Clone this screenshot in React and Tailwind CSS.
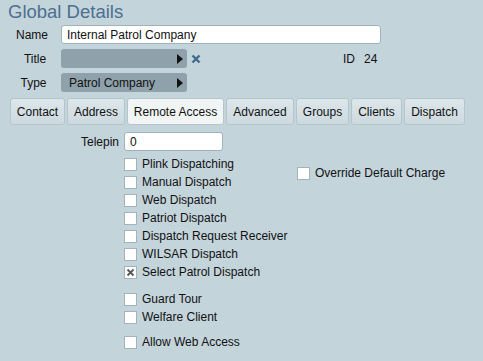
import React from "react";

const font = { fontFamily: '"Liberation Sans", Arial, sans-serif' };

const Check = ({ label, checked }) => (
    <div className="flex items-center h-[18px] whitespace-nowrap">
        <span className="w-[13px] h-[13px] bg-white border border-[#a3b3bb] flex items-center justify-center shrink-0">
            {checked && (
                <svg width="9" height="9" viewBox="0 0 9 9">
                    <path d="M1.5 1.5 L7.5 7.5 M7.5 1.5 L1.5 7.5" stroke="#555" strokeWidth="1.8" />
                </svg>
            )}
        </span>
        <span className="ml-[5px]">{label}</span>
    </div>
);

const Picker = ({ text }) => (
    <div className="w-[126px] h-[19px] bg-[#8fa1ab] rounded-[3px] flex items-center justify-between pl-[8px] pr-[4px]">
        <span>{text}</span>
        <svg width="6" height="10" viewBox="0 0 6 10"><path d="M0 0 L6 5 L0 10 Z" fill="#111" /></svg>
    </div>
);

const tabs = [
    { name: "Contact", w: "w-[55px]" },
    { name: "Address", w: "w-[58px]" },
    { name: "Remote Access", w: "w-[97px]" },
    { name: "Advanced", w: "w-[68px]" },
    { name: "Groups", w: "w-[53px]" },
    { name: "Clients", w: "w-[51px]" },
    { name: "Dispatch", w: "w-[61px]" },
];

const App = () => {
    return (
        <div style={font} className="w-[483px] h-[361px] bg-[#c4d4db] text-[12px] text-[#111] overflow-hidden">
            <div className="pl-[8px] pt-[1px] text-[18.5px] leading-[22px] text-[#4b7090]">Global Details</div>

            <div className="flex flex-col gap-[5px] mt-[2px]">
                <div className="flex items-center">
                    <span className="w-[61px] text-center pl-[3px]">Name</span>
                    <div className="w-[320px] h-[19px] bg-white border border-[#9fb2bd] rounded-[3px] flex items-center px-[5px]">Internal Patrol Company</div>
                </div>
                <div className="flex items-center">
                    <span className="w-[61px] text-center pl-[9px]">Title</span>
                    <Picker text="" />
                    <svg className="ml-[4px]" width="10" height="10" viewBox="0 0 10 10">
                        <path d="M1.5 1.5 L8.5 8.5 M8.5 1.5 L1.5 8.5" stroke="#3f6b8c" strokeWidth="2.4" />
                    </svg>
                    <span className="ml-[142px]">ID</span>
                    <span className="ml-[9px]">24</span>
                </div>
                <div className="flex items-center">
                    <span className="w-[61px] text-center pl-[6px]">Type</span>
                    <Picker text="Patrol Company" />
                </div>
            </div>

            <div className="flex gap-[2px] pl-[10px] mt-[6px]">
                {tabs.map((t) => (
                    <div
                        key={t.name}
                        className={
                            "h-[27px] flex items-center justify-center rounded-[3px] border border-[#b5c5cc] whitespace-nowrap " +
                            t.w + " " +
                            (t.name === "Remote Access" ? "bg-[#f1f5f6]" : "bg-gradient-to-b from-[#dde7eb] to-[#ccd9df]")
                        }
                    >
                        {t.name}
                    </div>
                ))}
            </div>

            <div className="flex items-center mt-[7px]">
                <span className="w-[124px] text-right pr-[5px]">Telepin</span>
                <div className="w-[99px] h-[19px] bg-white border border-[#9fb2bd] rounded-[3px] flex items-center px-[5px]">0</div>
            </div>

            <div className="flex mt-[4px]">
                <div className="pl-[124px] w-[297px]">
                    <Check label="Plink Dispatching" />
                    <Check label="Manual Dispatch" />
                    <Check label="Web Dispatch" />
                    <Check label="Patriot Dispatch" />
                    <Check label="Dispatch Request Receiver" />
                    <Check label="WILSAR Dispatch" />
                    <Check label="Select Patrol Dispatch" checked />
                    <div className="h-[9px]" />
                    <Check label="Guard Tour" />
                    <Check label="Welfare Client" />
                    <div className="h-[7px]" />
                    <Check label="Allow Web Access" />
                </div>
                <div className="pt-[9px]">
                    <Check label="Override Default Charge" />
                </div>
            </div>
        </div>
    );
};

export default App;
